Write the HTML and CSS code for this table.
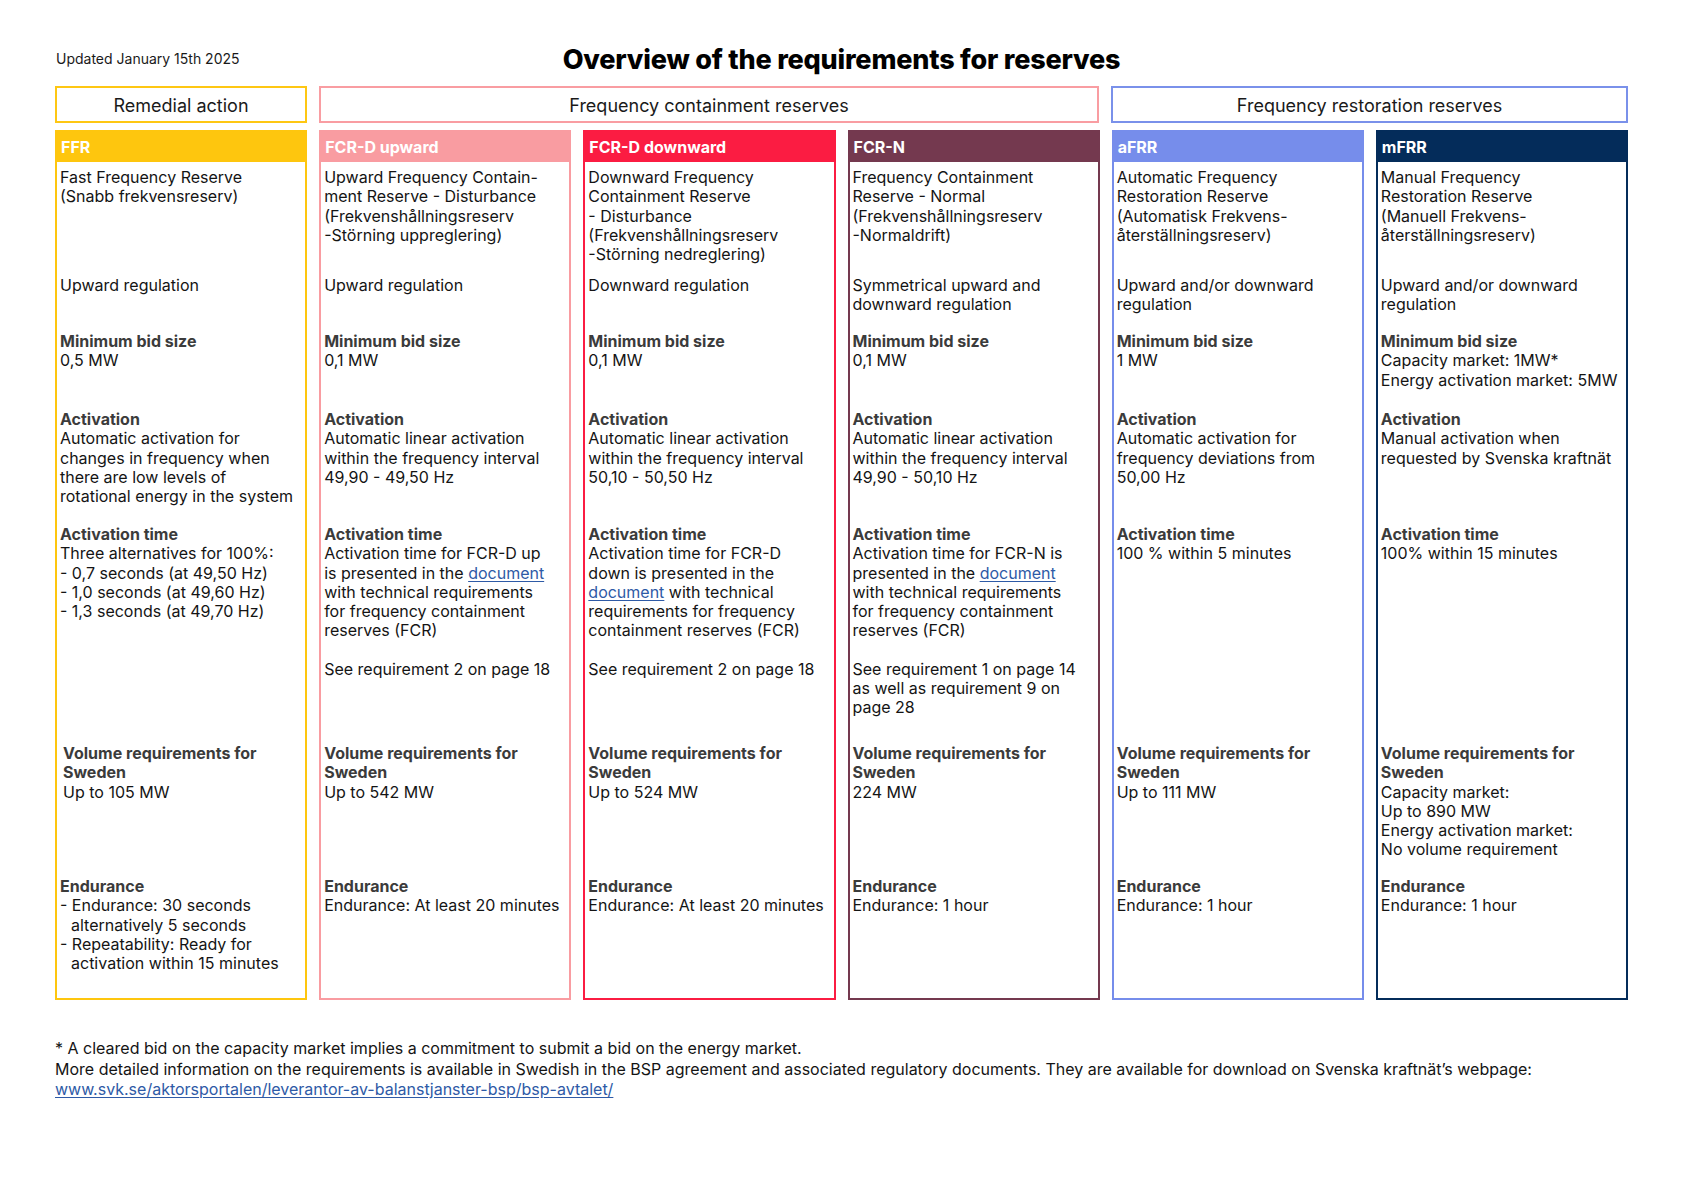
FILE: index.html
```html
<!DOCTYPE html>
<html lang="en">
<head>
<meta charset="utf-8">
<title>Overview of the requirements for reserves</title>
<link rel="stylesheet" href="styles.css">
</head>
<body>
<div class="page">
  <div class="top">
    <div class="updated">Updated January 15th 2025</div>
    <h1 class="title">Overview of the requirements for reserves</h1>
    <div></div>
  </div>

  <div class="groups">
    <div class="group g-rem">Remedial action</div>
    <div class="group g-fcr">Frequency containment reserves</div>
    <div class="group g-frr">Frequency restoration reserves</div>
  </div>

  <div class="cols">
    <div class="col c-ffr">
      <div class="head">FFR</div>
      <div class="cell desc">Fast Frequency Reserve<br>(Snabb frekvensreserv)</div>
      <div class="cell">Upward regulation</div>
      <div class="cell"><b>Minimum bid size</b><br>0,5 MW</div>
      <div class="cell"><b>Activation</b><br>Automatic activation for<br>changes in frequency when<br>there are low levels of<br>rotational energy in the system</div>
      <div class="cell"><b>Activation time</b><br>Three alternatives for 100%:<br>- 0,7 seconds (at 49,50 Hz)<br>- 1,0 seconds (at 49,60 Hz)<br>- 1,3 seconds (at 49,70 Hz)</div>
      <div class="cell shift"><b>Volume requirements for<br>Sweden</b><br>Up to 105 MW</div>
      <div class="cell"><b>Endurance</b>
        <div class="hang">- Endurance: 30 seconds alternatively 5 seconds</div>
        <div class="hang">- Repeatability: Ready for activation within 15 minutes</div>
      </div>
    </div>

    <div class="col c-fcrd-up">
      <div class="head">FCR-D upward</div>
      <div class="cell desc">Upward Frequency Contain-<br>ment Reserve - Disturbance<br>(Frekvenshållningsreserv<br>-Störning uppreglering)</div>
      <div class="cell">Upward regulation</div>
      <div class="cell"><b>Minimum bid size</b><br>0,1 MW</div>
      <div class="cell"><b>Activation</b><br>Automatic linear activation<br>within the frequency interval<br>49,90 - 49,50 Hz</div>
      <div class="cell"><b>Activation time</b><br>Activation time for FCR-D up<br>is presented in the <a href="#">document</a><br>with technical requirements<br>for frequency containment<br>reserves (FCR)
        <p class="see">See requirement 2 on page 18</p></div>
      <div class="cell"><b>Volume requirements for<br>Sweden</b><br>Up to 542 MW</div>
      <div class="cell"><b>Endurance</b><br>Endurance: At least 20 minutes</div>
    </div>

    <div class="col c-fcrd-down">
      <div class="head">FCR-D downward</div>
      <div class="cell desc">Downward Frequency<br>Containment Reserve<br>- Disturbance<br>(Frekvenshållningsreserv<br>-Störning nedreglering)</div>
      <div class="cell">Downward regulation</div>
      <div class="cell"><b>Minimum bid size</b><br>0,1 MW</div>
      <div class="cell"><b>Activation</b><br>Automatic linear activation<br>within the frequency interval<br>50,10 - 50,50 Hz</div>
      <div class="cell"><b>Activation time</b><br>Activation time for FCR-D<br>down is presented in the<br><a href="#">document</a> with technical<br>requirements for frequency<br>containment reserves (FCR)
        <p class="see">See requirement 2 on page 18</p></div>
      <div class="cell"><b>Volume requirements for<br>Sweden</b><br>Up to 524 MW</div>
      <div class="cell"><b>Endurance</b><br>Endurance: At least 20 minutes</div>
    </div>

    <div class="col c-fcrn">
      <div class="head">FCR-N</div>
      <div class="cell desc">Frequency Containment<br>Reserve - Normal<br>(Frekvenshållningsreserv<br>-Normaldrift)</div>
      <div class="cell">Symmetrical upward and<br>downward regulation</div>
      <div class="cell"><b>Minimum bid size</b><br>0,1 MW</div>
      <div class="cell"><b>Activation</b><br>Automatic linear activation<br>within the frequency interval<br>49,90 - 50,10 Hz</div>
      <div class="cell"><b>Activation time</b><br>Activation time for FCR-N is<br>presented in the <a href="#">document</a><br>with technical requirements<br>for frequency containment<br>reserves (FCR)
        <p class="see">See requirement 1 on page 14<br>as well as requirement 9 on<br>page 28</p></div>
      <div class="cell"><b>Volume requirements for<br>Sweden</b><br>224 MW</div>
      <div class="cell"><b>Endurance</b><br>Endurance: 1 hour</div>
    </div>

    <div class="col c-afrr">
      <div class="head">aFRR</div>
      <div class="cell desc">Automatic Frequency<br>Restoration Reserve<br>(Automatisk Frekvens-<br>återställningsreserv)</div>
      <div class="cell">Upward and/or downward<br>regulation</div>
      <div class="cell"><b>Minimum bid size</b><br>1 MW</div>
      <div class="cell"><b>Activation</b><br>Automatic activation for<br>frequency deviations from<br>50,00 Hz</div>
      <div class="cell"><b>Activation time</b><br>100 % within 5 minutes</div>
      <div class="cell"><b>Volume requirements for<br>Sweden</b><br>Up to 111 MW</div>
      <div class="cell"><b>Endurance</b><br>Endurance: 1 hour</div>
    </div>

    <div class="col c-mfrr">
      <div class="head">mFRR</div>
      <div class="cell desc">Manual Frequency<br>Restoration Reserve<br>(Manuell Frekvens-<br>återställningsreserv)</div>
      <div class="cell">Upward and/or downward<br>regulation</div>
      <div class="cell"><b>Minimum bid size</b><br>Capacity market: 1MW*<br>Energy activation market: 5MW</div>
      <div class="cell"><b>Activation</b><br>Manual activation when<br>requested by Svenska kraftnät</div>
      <div class="cell"><b>Activation time</b><br>100% within 15 minutes</div>
      <div class="cell"><b>Volume requirements for<br>Sweden</b><br>Capacity market:<br>Up to 890 MW<br>Energy activation market:<br>No volume requirement</div>
      <div class="cell"><b>Endurance</b><br>Endurance: 1 hour</div>
    </div>
  </div>

  <div class="foot">
    <p>* A cleared bid on the capacity market implies a commitment to submit a bid on the energy market.</p>
    <p class="more">More detailed information on the requirements is available in Swedish in the BSP agreement and associated regulatory documents. They are available for download on Svenska kraftnät’s webpage:<br><a href="#">www.svk.se/aktorsportalen/leverantor-av-balanstjanster-bsp/bsp-avtalet/</a></p>
  </div>
</div>
</body>
</html>
```

FILE: styles.css
```css
* { box-sizing: border-box; margin: 0; padding: 0; }

body {
  background: #ffffff;
  font-family: Inter, "Noto Sans", "Liberation Sans", sans-serif;
  color: #141414;
}

.page {
  width: 1684px;
  padding: 43px 56px 0 55px;
}

.top {
  display: grid;
  grid-template-columns: 1fr auto 1fr;
  align-items: center;
  height: 32px;
}

.updated {
  font-size: 14px;
  padding-left: 1px;
  padding-bottom: 2px;
  color: #1a1a1a;
}

.title {
  font-size: 27px;
  font-weight: 800;
  letter-spacing: -0.2px;
  color: #000;
}

.groups {
  display: grid;
  grid-template-columns: 252px 780px 1fr;
  column-gap: 12px;
  margin-top: 11px;
}

.group {
  height: 37px;
  border: 2px solid;
  display: flex;
  align-items: center;
  justify-content: center;
  font-size: 18px;
  padding-top: 1px;
  color: #1a1a1a;
}

.g-rem { border-color: #fec713; }
.g-fcr { border-color: #f99da2; }
.g-frr { border-color: #7a91ea; }

.cols {
  display: grid;
  grid-template-columns: repeat(6, 1fr);
  column-gap: 12px;
  margin-top: 7px;
  height: 870px;
}

.col {
  border: 2px solid var(--c);
  display: grid;
  grid-template-rows: 30px 113px 56px 78px 115px 219px 133px 1fr;
  font-size: 16px;
  line-height: 19.3px;
}

.c-ffr { --c: #fec60e; }
.c-fcrd-up { --c: #f99ca1; }
.c-fcrd-down { --c: #fb1c42; }
.c-fcrn { --c: #74394f; }
.c-afrr { --c: #768deb; }
.c-mfrr { --c: #042c5a; }

.head {
  background: var(--c);
  color: #fff;
  font-weight: 700;
  font-size: 16px;
  display: flex;
  align-items: center;
  padding-left: 6px;
  margin: -2px -2px 0;
  padding-top: 3px;
}

.cell {
  padding: 1px 3px 0;
}

.desc { padding-top: 6px; }

.shift { padding-left: 6px; }

.cell b {
  font-weight: 700;
  color: #3b3b3b;
}

.hang {
  padding-left: 11px;
  text-indent: -11px;
}

.see { margin-top: 19px; }

a {
  color: #2e5aa6;
  text-decoration: underline;
  text-underline-offset: 2px;
}

.foot {
  margin-top: 39px;
  font-size: 16px;
  line-height: 19.3px;
  color: #141414;
}

.foot .more { margin-top: 2px; }
```
